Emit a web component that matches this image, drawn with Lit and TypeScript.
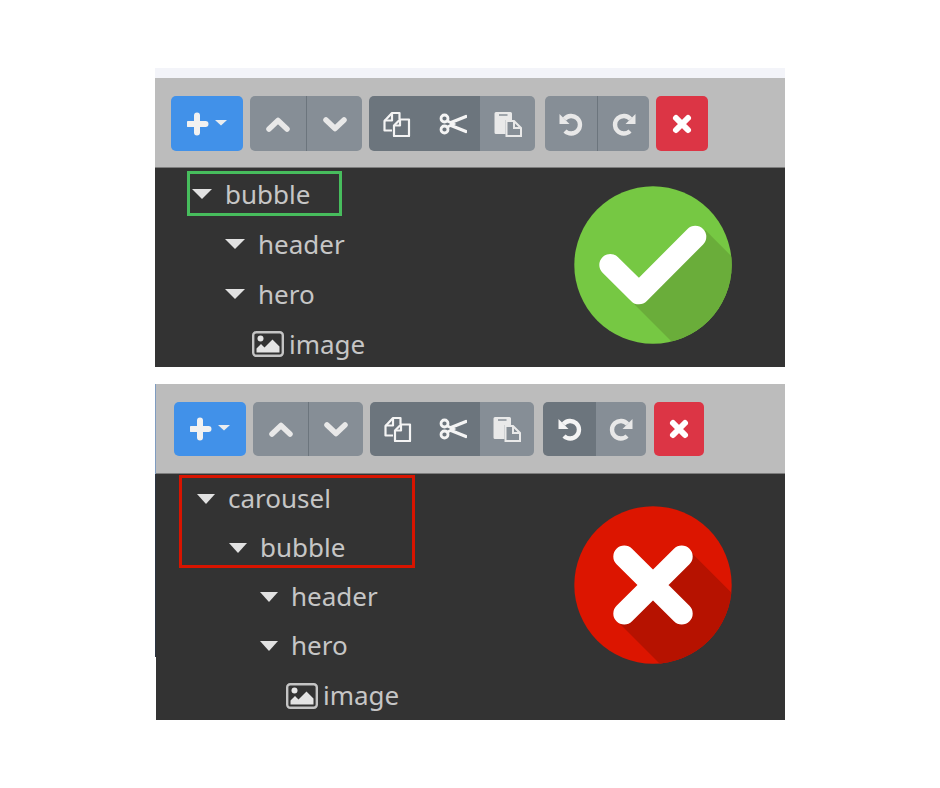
import { LitElement, html, css, svg } from "lit";
import { customElement } from "lit/decorators.js";

const ICONS: Record<string, any> = {
  plus: svg`<svg width="40" height="24" viewBox="0 0 40 24"><path d="M10 3.500v17M1.500 12h17" stroke="#f1f1f1" stroke-width="6" stroke-linecap="round"/><path d="M28 8h12l-6 5.500z" fill="#e9ecef"/></svg>`,
  up: svg`<svg width="26" height="24" viewBox="0 0 26 24"><path d="M4 17l9-8.500 9 8.500" fill="none" stroke="#e8e8e8" stroke-width="5.500" stroke-linecap="round" stroke-linejoin="round"/></svg>`,
  down: svg`<svg width="26" height="24" viewBox="0 0 26 24"><path d="M4 8l9 8.500 9-8.500" fill="none" stroke="#e8e8e8" stroke-width="5.500" stroke-linecap="round" stroke-linejoin="round"/></svg>`,
  copy: svg`<svg width="28" height="26" viewBox="0 0 28 26" fill="none" stroke="#f4f4f4" stroke-width="2.200" stroke-linejoin="round"><path d="M9 19.500H1.500V10L9 2h7.500v6"/><path d="M9 2v7.500H1.500"/><path d="M17 8.500h9V25H11V14.500z"/><path d="M17 8.500v6h-6"/></svg>`,
  cut: svg`<svg width="28" height="24" viewBox="0 0 28 24" fill="none" stroke="#f4f4f4"><circle cx="5.500" cy="6.500" r="3.500" stroke-width="2.800"/><circle cx="5.500" cy="17.500" r="3.500" stroke-width="2.800"/><path d="M8.500 9l6 3-6 3" stroke-width="2.600"/><path d="M12 10.500L27 4.500M12 13.500l15 6" stroke-width="3.200" stroke-linecap="round"/></svg>`,
  paste: svg`<svg width="28" height="26" viewBox="0 0 28 26"><path d="M0.500 2.500A1.500 1.500 0 0 1 2 1h14.500A1.500 1.500 0 0 1 18 2.500V9h-6.500v14H2a1.500 1.500 0 0 1-1.500-1.500z" fill="#e9e9e9"/><path d="M5 4h8.500" stroke="#868e96" stroke-width="1.500"/><path d="M12.500 10h7.500l7 7v8H12.500z" fill="#868e96" stroke="#e9e9e9" stroke-width="2"/><path d="M20 10v7h7" fill="none" stroke="#e9e9e9" stroke-width="2"/></svg>`,
  undo: svg`<svg width="26" height="26" viewBox="0 0 26 26"><path d="M6.500 8A8.800 8.800 0 1 1 7 20" fill="none" stroke="#e8e8e8" stroke-width="4.400"/><path d="M1.500 3v10h10z" fill="#e8e8e8"/></svg>`,
  undoActive: svg`<svg width="26" height="26" viewBox="0 0 26 26"><path d="M6.500 8A8.800 8.800 0 1 1 7 20" fill="none" stroke="#f4f4f4" stroke-width="4.400"/><path d="M1.500 3v10h10z" fill="#f4f4f4"/></svg>`,
  redo: svg`<svg width="26" height="26" viewBox="0 0 26 26"><path d="M19.500 8A8.800 8.800 0 1 0 19 20" fill="none" stroke="#e8e8e8" stroke-width="4.400"/><path d="M24.500 3v10h-10z" fill="#e8e8e8"/></svg>`,
  close: svg`<svg width="24" height="24" viewBox="0 0 24 24"><path d="M6 6l12 12M18 6L6 18" stroke="#fff" stroke-width="6" stroke-linecap="round"/></svg>`,
};

const imageIcon = svg`<svg width="32" height="26" viewBox="0 0 32 26"><rect x="1.200" y="1.200" width="29.600" height="23.600" rx="3" fill="none" stroke="#c4c4c4" stroke-width="2.400"/><circle cx="8.500" cy="7.500" r="3" fill="#e4e4e4"/><path d="M4.500 21.500v-4l4.500-4.500 3.500 3.500 8-8 7 7v6z" fill="#e4e4e4"/></svg>`;

const checkBadge = svg`<svg width="158" height="158" viewBox="-79 -79 158 158"><defs><clipPath id="c1"><circle r="78.700"/></clipPath></defs><circle r="78.700" fill="#76c843"/><g clip-path="url(#c1)"><path d="M-18.700 39.300L52.300-35 152 65 81 139z" fill="#6aad3a"/></g><path d="M-42.700 0L-14 28.300 42.300-28.300" fill="none" stroke="#fff" stroke-width="22" stroke-linecap="round" stroke-linejoin="round"/></svg>`;

const crossBadge = svg`<svg width="158" height="158" viewBox="-79 -79 158 158"><defs><clipPath id="c2"><circle r="78.700"/></clipPath></defs><circle r="78.700" fill="#dc1500"/><g clip-path="url(#c2)"><path d="M-32.700 39.300L39-31.700 139 68 67 139z" fill="#b61200"/></g><path d="M-28.700-28.500L28.700 28.500M28.700-28.500L-28.700 28.500" fill="none" stroke="#fff" stroke-width="22" stroke-linecap="round"/></svg>`;

type Btn = { icon: string; w: number; on?: boolean };
type Grp = { kind: string; gap: number; btns: Btn[] };
type Row = { label: string; x: number; image?: boolean };

const TOOLBAR_A: Grp[] = [
  { kind: "blue", gap: 0, btns: [{ icon: "plus", w: 72 }] },
  { kind: "gray", gap: 7, btns: [{ icon: "up", w: 56 }, { icon: "down", w: 56 }] },
  { kind: "gray flat", gap: 7, btns: [{ icon: "copy", w: 56, on: true }, { icon: "cut", w: 55, on: true }, { icon: "paste", w: 55 }] },
  { kind: "gray", gap: 10, btns: [{ icon: "undo", w: 52 }, { icon: "redo", w: 52 }] },
  { kind: "red", gap: 7, btns: [{ icon: "close", w: 52 }] },
];
const TOOLBAR_B: Grp[] = [
  { kind: "blue", gap: 0, btns: [{ icon: "plus", w: 72 }] },
  { kind: "gray", gap: 7, btns: [{ icon: "up", w: 55 }, { icon: "down", w: 55 }] },
  { kind: "gray flat", gap: 7, btns: [{ icon: "copy", w: 55, on: true }, { icon: "cut", w: 55, on: true }, { icon: "paste", w: 54 }] },
  { kind: "gray flat", gap: 9, btns: [{ icon: "undoActive", w: 53, on: true }, { icon: "redo", w: 50 }] },
  { kind: "red", gap: 8, btns: [{ icon: "close", w: 50 }] },
];
const TREE_A: Row[] = [
  { label: "bubble", x: 37 },
  { label: "header", x: 70 },
  { label: "hero", x: 70 },
  { label: "image", x: 97, image: true },
];
const TREE_B: Row[] = [
  { label: "carousel", x: 41 },
  { label: "bubble", x: 73 },
  { label: "header", x: 104 },
  { label: "hero", x: 104 },
  { label: "image", x: 130, image: true },
];

@customElement("app-root")
export class AppRoot extends LitElement {
  static styles = css`
    :host { display: block; width: 940px; height: 788px; background: #fff; overflow: hidden; font-family: "Noto Sans", "Open Sans", sans-serif; }
    .page { display: flex; flex-direction: column; padding-top: 68px; }
    .strip { height: 10px; margin-left: 155px; width: 630px; background: #f3f4f9; }
    .panel { position: relative; width: 630px; margin-left: 155px; }
    .panel.b { width: 629px; margin-left: 156px; margin-top: 17px; }
    .toolbar { height: 90px; box-sizing: border-box; background: #bcbcbc; display: flex; padding: 18px 0 0 16px; border-bottom: 1px solid #7d7d7d; }
    .b .toolbar { padding-left: 18px; }
    .group { height: 55px; display: flex; border-radius: 5px; overflow: hidden; }
    .b .group { height: 54px; }
    .btn { display: flex; align-items: center; justify-content: center; box-sizing: border-box; background: #868e96; }
    .blue .btn { background: #4191e9; }
    .red .btn { background: #dc3545; }
    .gray .btn + .btn { border-left: 1px solid #6c757d; }
    .gray.flat .btn + .btn { border-left: none; }
    .btn.on { background: #6c757d; }
    .btn svg { display: block; }
    .tree { position: relative; background: #333; height: 199px; overflow: hidden; padding-top: 1px; box-sizing: border-box; }
    .b .tree { height: 246px; padding-top: 0; }
    .row { height: 50px; display: flex; align-items: center; color: #c6c6c6; font-size: 26px; line-height: 1; }
    .b .row { height: 49.250px; }
    .b .label { margin-top: -2px; }
    .caret { width: 0; height: 0; border-left: 10px solid transparent; border-right: 10px solid transparent; border-top: 10px solid #e2e2e2; margin-right: 13px; flex: none; }
    .b .caret { border-left-width: 9px; border-right-width: 9px; }
    .row svg { display: block; flex: none; margin-right: 5px; }
    .mark { position: absolute; box-sizing: border-box; pointer-events: none; }
    .mark.good { left: 32px; top: 3px; width: 155px; height: 45px; border: 3px solid #47bd5d; }
    .mark.bad { left: 23px; top: 1px; width: 236px; height: 93px; border: 3px solid #d81400; }
    .badge { position: absolute; left: 418.500px; top: 18px; width: 158px; height: 158px; }
    .b .badge { left: 417.500px; top: 32px; }
    .badge svg { display: block; }
    .edge { position: absolute; left: -1px; top: 0; width: 1px; height: 273px; background: linear-gradient(#7f9cc0 0 90px, #2b3441 90px); }
  `;

  private toolbar(groups: Grp[]) {
    return html`<div class="toolbar">
      ${groups.map(
        (g) => html`<div class="group ${g.kind}" style="margin-left:${g.gap}px">
          ${g.btns.map(
            (b) => html`<div class="btn ${b.on ? "on" : ""}" style="width:${b.w}px">${ICONS[b.icon]}</div>`
          )}
        </div>`
      )}
    </div>`;
  }

  private tree(rows: Row[]) {
    return rows.map(
      (r) => html`<div class="row" style="padding-left:${r.x}px">
        ${r.image ? imageIcon : html`<span class="caret"></span>`}<span class="label">${r.label}</span>
      </div>`
    );
  }

  render() {
    return html`<div class="page">
      <div class="strip"></div>
      <section class="panel a">
        ${this.toolbar(TOOLBAR_A)}
        <div class="tree">
          ${this.tree(TREE_A)}
          <div class="mark good"></div>
          <div class="badge">${checkBadge}</div>
        </div>
      </section>
      <section class="panel b">
        <div class="edge"></div>
        ${this.toolbar(TOOLBAR_B)}
        <div class="tree">
          ${this.tree(TREE_B)}
          <div class="mark bad"></div>
          <div class="badge">${crossBadge}</div>
        </div>
      </section>
    </div>`;
  }
}
